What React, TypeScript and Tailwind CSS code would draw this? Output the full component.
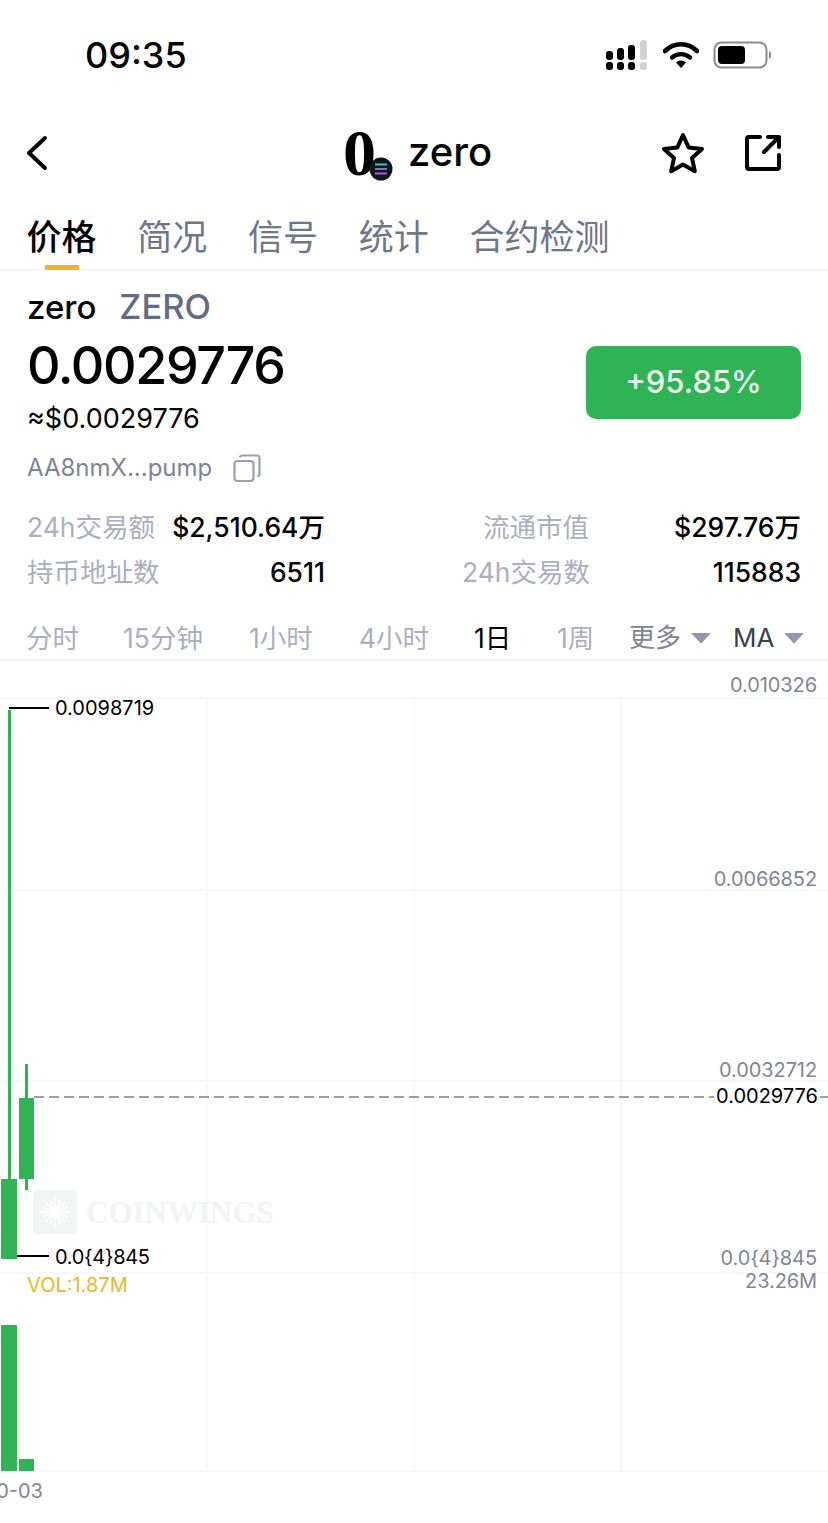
const tabs = ["价格", "简况", "信号", "统计", "合约检测"];
const GREEN = "bg-[#30b354]";

function Caret() {
  return (
    <svg width="20" height="12" viewBox="0 0 20 12" className="ml-[10px]">
      <path d="M1 1.5h18L10 11z" fill="#9096ad" stroke="#9096ad" strokeLinejoin="round" />
    </svg>
  );
}

function StatusIcons() {
  return (
    <div className="flex items-center">
      <svg width="44" height="32" viewBox="0 0 44 32" className="mr-[14px]">
        <rect x="1" y="12" width="7" height="9" rx="3" fill="#000" />
        <rect x="12" y="9" width="7" height="12" rx="3" fill="#000" />
        <rect x="23" y="6" width="7" height="15" rx="3" fill="#000" />
        <rect x="35" y="1" width="7" height="20" rx="3" fill="#d2d2d2" />
        <rect x="1" y="23" width="7" height="8" rx="3" fill="#000" />
        <rect x="12" y="23" width="7" height="8" rx="3" fill="#000" />
        <rect x="23" y="23" width="7" height="8" rx="3" fill="#000" />
        <rect x="35" y="23" width="7" height="8" rx="3" fill="#d2d2d2" />
      </svg>
      <svg width="36" height="28" viewBox="0 0 36 28" className="mr-[14px]">
        <path d="M2 10C11 1 25 1 34 10" fill="none" stroke="#000" strokeWidth="4.6" strokeLinecap="round" />
        <path d="M9 16.5C14 12 22 12 27 16.5" fill="none" stroke="#000" strokeWidth="4.4" strokeLinecap="round" />
        <path d="M13 21.5C16 18.7 20 18.7 23 21.5L18 27z" fill="#000" />
      </svg>
      <svg width="60" height="30" viewBox="0 0 60 30">
        <rect x="1.5" y="2.5" width="52" height="25" rx="7" fill="none" stroke="#8c8c8c" strokeWidth="2" />
        <rect x="5" y="6" width="27" height="18" rx="4" fill="#000" />
        <path d="M56 11c3 1 3 7 0 8z" fill="#8c8c8c" />
      </svg>
    </div>
  );
}

function Header() {
  return (
    <div className="relative flex h-[86px] items-center justify-between pl-[24px] pr-[47px]">
      <svg width="26" height="36" viewBox="0 0 26 36" fill="none" stroke="#000" strokeWidth="4" strokeLinecap="round" strokeLinejoin="round">
        <path d="M21 3L5 18l16 15" />
      </svg>
      <div className="absolute left-[343px] top-[18px] flex items-center">
        <div className="relative h-[48px] w-[48px]">
          <span className="absolute left-0 top-[-11px] font-['Liberation_Serif',serif] text-[66px] font-bold leading-[72px] text-black">0</span>
          <svg width="24" height="24" viewBox="0 0 24 24" className="absolute left-[26px] top-[29px]">
            <circle cx="12" cy="12" r="11.5" fill="#141420" />
            <path d="M6 7.5h12" stroke="#37c9a0" strokeWidth="2" />
            <path d="M6 12h12" stroke="#7d78c8" strokeWidth="2" />
            <path d="M6 16.5h12" stroke="#a45ce0" strokeWidth="2" />
          </svg>
        </div>
        <span className="ml-[17px] text-[40px] font-medium leading-[48px] text-black">zero</span>
      </div>
      <div className="flex items-center gap-[40px]">
        <svg width="44" height="44" viewBox="0 0 44 44" fill="none" stroke="#000" strokeWidth="4" strokeLinejoin="round">
          <path d="M22 4l5.6 12.4 13.4 1.5-10 9.1 2.8 13.2L22 33.4 10.2 40.2 13 27 3 17.9l13.4-1.5z" />
        </svg>
        <svg width="36" height="36" viewBox="0 0 36 36" fill="none" stroke="#000" strokeWidth="4" strokeLinecap="round" strokeLinejoin="round">
          <path d="M15 2H4a2 2 0 0 0-2 2v28a2 2 0 0 0 2 2h28a2 2 0 0 0 2-2V20" />
          <path d="M19 17L34 2M23 2h11v10" />
        </svg>
      </div>
    </div>
  );
}

function Tabs() {
  return (
    <div className="flex h-[75px] items-start gap-[40.75px] border-b-2 border-[#f5f6f7] pl-[26.5px] pt-[18px]">
      {tabs.map((t, i) => (
        <div key={t} className="relative h-[53px]">
          <span className={`block text-[35px] leading-[46px] ${i === 0 ? "font-medium text-black" : "text-[#6e778a]"}`}>{t}</span>
          {i === 0 && <div className="absolute left-[18px] top-[51px] h-[5px] w-[34px] bg-[#f0b429]" />}
        </div>
      ))}
    </div>
  );
}

function Stat({ label, value, w }: { label: string; value: string; w: string }) {
  return (
    <div className={`flex items-center justify-between ${w}`}>
      <span className="text-[26.5px] leading-[34px] text-[#a9afbf]">{label}</span>
      <span className="text-[26.5px] font-medium leading-[34px] text-black">{value}</span>
    </div>
  );
}

function Summary() {
  return (
    <div className="px-[27px]">
      <div className="mt-[16px] flex items-center gap-[23px] leading-[40px]">
        <span className="text-[33px] font-medium text-black">zero</span>
        <span className="text-[34.5px] font-medium text-[#636c84]">ZERO</span>
      </div>
      <div className="flex items-start justify-between">
        <div>
          <div className="mt-[8px] text-[52px] font-medium leading-[62px] tracking-[-1.35px] text-black">0.0029776</div>
          <div className="mt-[4px] text-[27px] leading-[36px] text-black">≈$0.0029776</div>
        </div>
        <div className={`ml-auto mt-[19px] flex h-[73px] w-[215px] items-center justify-center rounded-[10px] ${GREEN} text-[31px] font-medium text-[#ecf9ef]`}>
          +95.85%
        </div>
      </div>
      <div className="mt-[14px] flex items-center">
        <span className="text-[24px] leading-[34px] text-[#7d8494]">AA8nmX...pump</span>
        <svg width="28" height="28" viewBox="0 0 28 28" fill="none" stroke="#9aa0ad" strokeWidth="2.2" strokeLinejoin="round" className="ml-[21px]">
          <rect x="1.5" y="7" width="19" height="20" rx="3" />
          <path d="M7 3.5A2.5 2.5 0 0 1 9.5 1.5H24a2.5 2.5 0 0 1 2.5 2.5v16a2.5 2.5 0 0 1-2 2.4" />
        </svg>
      </div>
      <div className="mt-[25px] flex flex-col gap-[11px]">
        <div className="flex justify-between">
          <Stat label="24h交易额" value="$2,510.64万" w="w-[298px]" />
          <Stat label="流通市值" value="$297.76万" w="w-[318px]" />
        </div>
        <div className="flex justify-between">
          <Stat label="持币地址数" value="6511" w="w-[298px]" />
          <Stat label="24h交易数" value="115883" w="w-[339px]" />
        </div>
      </div>
    </div>
  );
}

function Periods() {
  const items = [
    { t: "分时", x: "w-[97px]" },
    { t: "15分钟", x: "w-[126px]" },
    { t: "1小时", x: "w-[110px]" },
    { t: "4小时", x: "w-[115px]" },
    { t: "1日", x: "w-[83px]", active: true },
    { t: "1周", x: "w-[72px]" },
  ];
  return (
    <div className="mt-[32px] flex h-[40px] items-start border-b-2 border-[#f5f6f7] pl-[26px]">
      {items.map((it) => (
        <span key={it.t} className={`${it.x} text-[26.5px] leading-[34px] ${it.active ? "text-black" : "text-[#a9afbf]"}`}>
          {it.t}
        </span>
      ))}
      <div className="flex h-[34px] items-center text-[26px] leading-[34px] text-[#7d8494]">
        更多
        <Caret />
      </div>
      <div className="ml-[22px] flex h-[34px] items-center text-[26px] leading-[34px] text-[#3c4150]">
        MA
        <Caret />
      </div>
    </div>
  );
}

// chart is a free canvas, everything is placed from the chart's top-left (y = 661 on the page)
function Chart() {
  const hLines = [36, 228, 419, 611, 809];
  const vLines = [206, 413, 620];
  const axis = [
    { t: "0.010326", top: 11 },
    { t: "0.0066852", top: 205 },
    { t: "0.0032712", top: 396 },
    { t: "0.0{4}845", top: 584 },
    { t: "23.26M", top: 607 },
  ];
  return (
    <div className="relative h-[862px] w-full overflow-hidden">
      {hLines.map((y) => (
        <div key={y} className="absolute left-0 right-0 h-[2px] bg-[#f7f8f9]" style={{ top: y }} />
      ))}
      {vLines.map((x) => (
        <div key={x} className="absolute top-[36px] h-[773px] w-[2px] bg-[#f7f8f9]" style={{ left: x }} />
      ))}

      {axis.map((a) => (
        <span key={a.t} className="absolute right-[11px] text-[20px] leading-[26px] tracking-[-0.1px] text-[#7f8694]" style={{ top: a.top }}>
          {a.t}
        </span>
      ))}

      {/* watermark */}
      <div className="absolute left-[33px] top-[529px] flex h-[44px] w-[44px] items-center justify-center rounded-[3px] bg-[#f3f5f4]">
        <svg width="32" height="32" viewBox="0 0 34 34" stroke="#fff" strokeWidth="1.8" strokeLinecap="round">
          <path d="M17 2v30M2 17h30M7 7l20 20M27 7L7 27M12 5l10 24M22 5L12 29M5 12l24 10M5 22l24-10" />
        </svg>
      </div>
      <span className="absolute left-[86px] top-[532px] font-['Liberation_Serif',serif] text-[31px] font-bold leading-[40px] text-[#f2f3f3]">
        COINWINGS
      </span>

      {/* last price line */}
      <div className="absolute left-[34px] top-[435px] h-[2px] w-[680px] bg-[repeating-linear-gradient(90deg,#9a9eac_0_10px,transparent_10px_15px)]" />
      <div className="absolute left-[820px] top-[435px] h-[2px] w-[8px] bg-[#9a9eac]" />
      <span className="absolute right-[10px] top-[421px] text-[20px] leading-[28px] text-black">0.0029776</span>

      {/* candles */}
      <div className={`absolute left-[8px] top-[49px] h-[470px] w-[3px] ${GREEN}`} />
      <div className={`absolute left-[1px] top-[518px] h-[80px] w-[16px] ${GREEN}`} />
      <div className={`absolute left-[25px] top-[403px] h-[126px] w-[3px] ${GREEN}`} />
      <div className={`absolute left-[19px] top-[437px] h-[81px] w-[15px] ${GREEN}`} />

      {/* volume */}
      <div className={`absolute left-[1px] top-[664px] h-[146px] w-[16px] ${GREEN}`} />
      <div className={`absolute left-[19px] top-[798px] h-[12px] w-[15px] ${GREEN}`} />

      {/* high / low marks */}
      <div className="absolute left-[9px] top-[46px] h-[2px] w-[40px] bg-black" />
      <span className="absolute left-[55px] top-[34px] text-[20px] leading-[26px] text-black">0.0098719</span>
      <div className="absolute left-[17px] top-[594px] h-[2px] w-[32px] bg-black" />
      <span className="absolute left-[55px] top-[583px] text-[20px] leading-[26px] tracking-[-0.3px] text-black">0.0{"{4}"}845</span>

      <span className="absolute left-[27px] top-[611px] text-[20px] leading-[26px] text-[#f0b429]">VOL:1.87M</span>
      <span className="absolute left-[-12px] top-[817px] text-[20px] leading-[26px] text-[#7f8694]">10-03</span>
    </div>
  );
}

export default function App() {
  return (
    <div className="h-[1523px] w-[828px] overflow-hidden bg-white font-['Inter','Noto_Sans_CJK_SC',sans-serif]">
      <div className="flex h-[110px] items-center justify-between pl-[85px] pr-[55px]">
        <span className="text-[36px] font-medium leading-[44px] text-black">09:35</span>
        <StatusIcons />
      </div>
      <Header />
      <Tabs />
      <Summary />
      <Periods />
      <Chart />
    </div>
  );
}
